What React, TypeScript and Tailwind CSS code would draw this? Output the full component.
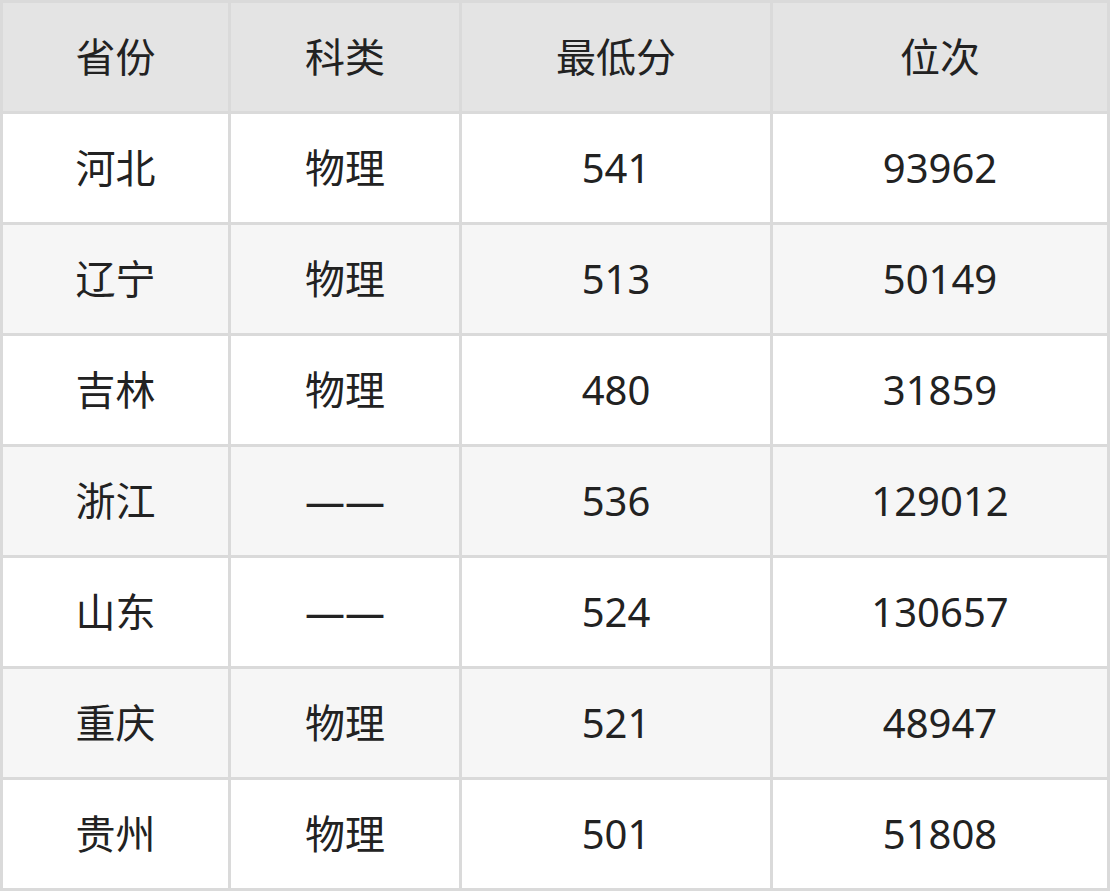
import React from "react";

const header = ["省份", "科类", "最低分", "位次"];
const rows = [
  ["河北", "物理", "541", "93962"],
  ["辽宁", "物理", "513", "50149"],
  ["吉林", "物理", "480", "31859"],
  ["浙江", "——", "536", "129012"],
  ["山东", "——", "524", "130657"],
  ["重庆", "物理", "521", "48947"],
  ["贵州", "物理", "501", "51808"],
];

export default function App() {
  return (
    <div
      className="w-[1110px] h-[891px] bg-[#dadada] p-[3px] grid grid-cols-[225px_228px_308px_334px] grid-rows-[repeat(8,108px)] gap-[3px] text-[#222222] text-[40px]"
      style={{ fontFamily: '"Noto Sans", "Noto Sans CJK SC", sans-serif' }}
    >
      {header.map((h, i) => (
        <div key={"h" + i} className="bg-[#e4e4e4] flex items-center justify-center">
          {h}
        </div>
      ))}
      {rows.map((r, ri) =>
        r.map((c, ci) => (
          <div
            key={ri + "-" + ci}
            className={`${ri % 2 === 0 ? "bg-white" : "bg-[#f6f6f6]"} flex items-center justify-center`}
          >
            {c}
          </div>
        ))
      )}
    </div>
  );
}
